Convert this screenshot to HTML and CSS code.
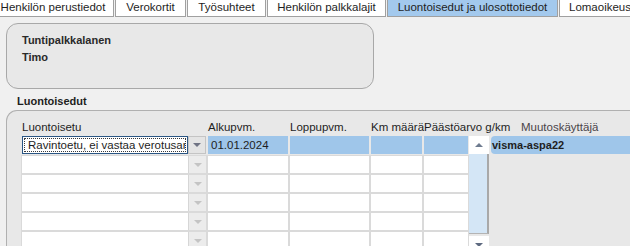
FILE: index.html
```html
<!DOCTYPE html>
<html>
<head>
  <meta charset="utf-8">
  <title>Luontoisedut ja ulosottotiedot</title>
  <link rel="stylesheet" href="styles.css">
</head>
<body>
  <div class="tabs">
    <div class="tab tab-perus">Henkilön perustiedot</div>
    <div class="tab tab-vero">Verokortit</div>
    <div class="tab tab-tyo">Työsuhteet</div>
    <div class="tab tab-palkka">Henkilön palkkalajit</div>
    <div class="tab tab-luontois active">Luontoisedut ja ulosottotiedot</div>
    <div class="tab tab-loma">Lomaoikeus</div>
  </div>

  <div class="card">
    <div class="card-line">Tuntipalkkalanen</div>
    <div class="card-line">Timo</div>
  </div>

  <div class="section-title">Luontoisedut</div>

  <div class="panel">
    <div class="grid">
      <div class="head">Luontoisetu</div>
      <div class="head">Alkupvm.</div>
      <div class="head">Loppupvm.</div>
      <div class="head">Km määrä</div>
      <div class="head">Päästöarvo g/km</div>
      <div class="head"></div>
      <div class="head head-user">Muutoskäyttäjä</div>

      <!-- row 1 (selected) -->
      <div class="combo selected">
        <div class="combo-input"><span class="focus">Ravintoetu, ei vastaa verotusarvoa</span></div>
        <div class="combo-btn"><span class="arrow"></span></div>
      </div>
      <div class="cell sel">01.01.2024</div>
      <div class="cell sel"></div>
      <div class="cell sel"></div>
      <div class="cell sel"></div>
      <div class="vscroll">
        <div class="vs-btn"><span class="tri-up"></span></div>
        <div class="vs-track"></div>
        <div class="vs-btn"><span class="tri-down"></span></div>
      </div>
      <div class="user">visma-aspa22</div>

      <!-- empty rows -->
      <div class="combo"><div class="combo-input"></div><div class="combo-btn"><span class="arrow"></span></div></div>
      <div class="cell"></div><div class="cell"></div><div class="cell"></div><div class="cell"></div>
      <div class="blank"></div>

      <div class="combo"><div class="combo-input"></div><div class="combo-btn"><span class="arrow"></span></div></div>
      <div class="cell"></div><div class="cell"></div><div class="cell"></div><div class="cell"></div>
      <div class="blank"></div>

      <div class="combo"><div class="combo-input"></div><div class="combo-btn"><span class="arrow"></span></div></div>
      <div class="cell"></div><div class="cell"></div><div class="cell"></div><div class="cell"></div>
      <div class="blank"></div>

      <div class="combo"><div class="combo-input"></div><div class="combo-btn"><span class="arrow"></span></div></div>
      <div class="cell"></div><div class="cell"></div><div class="cell"></div><div class="cell"></div>
      <div class="blank"></div>

      <div class="combo"><div class="combo-input"></div><div class="combo-btn"><span class="arrow"></span></div></div>
      <div class="cell"></div><div class="cell"></div><div class="cell"></div><div class="cell"></div>
      <div class="blank"></div>
    </div>
  </div>
</body>
</html>
```

FILE: styles.css
```css
* {
  box-sizing: border-box;
}

body {
  margin: 0;
  background: #f0f0f0;
  font-family: "Liberation Sans", Arial, sans-serif;
  font-size: 11.5px;
  color: #1e1e1e;
  overflow: hidden;
}

/* tab strip, scrolled a bit to the left */
.tabs {
  display: flex;
  gap: 1px;
  margin-left: -12px;
  height: 17px;
  white-space: nowrap;
}

.tab {
  flex: none;
  height: 17px;
  line-height: 14px;
  text-align: center;
  background: #fff;
  border: 1px solid #a0a0a0;
  border-top: none;
}

.tab-perus { width: 126px; padding-left: 4px; }
.tab-vero { width: 71px; }
.tab-tyo { width: 79px; }
.tab-palkka { width: 119px; }
.tab-luontois { width: 171px; }
.tab-loma { width: 100px; text-align: left; padding-left: 9px; }

.tab.active {
  background: #a3c9ed;
}

/* person header */
.card {
  width: 368px;
  height: 66px;
  margin: 6px 0 0 6px;
  padding: 8px 0 0 15px;
  background: #e8e8e8;
  border: 1px solid #a8a8a8;
  border-radius: 12px;
  font-weight: bold;
  font-size: 11px;
  color: #2a2a2a;
}

.card-line {
  line-height: 17px;
}

.section-title {
  margin: 5px 0 2px 17px;
  line-height: 14px;
  font-weight: bold;
  font-size: 11px;
}

.panel {
  margin: 0 -20px 0 6px;
  height: 200px;
  padding: 6px 0 0 15px;
  background: #e8e8e8;
  border-top: 1px solid #b0b0b0;
  border-left: 1px solid #b0b0b0;
  border-top-left-radius: 11px;
}

.grid {
  display: grid;
  grid-template-columns: 184px 80px 79px 51px 44px 19px 1fr;
  grid-template-rows: 17px 18px repeat(5, 17px);
  column-gap: 2px;
  row-gap: 2px;
}

.head {
  align-self: end;
  line-height: 14px;
  white-space: nowrap;
}

.head-user {
  padding-left: 30px;
  color: #4a4448;
}

.cell {
  background: #fff;
  outline: 1px solid #dadada;
}

.cell.sel {
  background: #9fc6ea;
  outline: none;
  padding-left: 3px;
  line-height: 18px;
}

.combo {
  display: flex;
  outline: 1px solid #dadada;
}

.combo-input {
  flex: 1;
  background: #fff;
  overflow: hidden;
  white-space: nowrap;
}

.combo-btn {
  width: 18px;
  display: flex;
  align-items: center;
  justify-content: center;
  background: #ececec;
  border-left: 1px solid #d6d6d6;
}

.arrow {
  width: 0;
  height: 0;
  border-left: 4px solid transparent;
  border-right: 4px solid transparent;
  border-top: 4px solid #c4c4c4;
}

.combo.selected {
  outline: none;
}

.combo.selected .combo-input {
  border: 1px solid #2a5684;
  padding: 1px;
}

.combo.selected .focus {
  display: block;
  height: 14px;
  line-height: 12px;
  padding-left: 3px;
  border: 1px dotted #3a3a3a;
  overflow: hidden;
}

.combo.selected .combo-btn {
  background: #e4e4e4;
  border: 1px solid #c4c4c4;
}

.combo.selected .arrow {
  border-top-color: #6f7383;
}

/* vertical scrollbar of the rows */
.vscroll {
  grid-column: 6;
  grid-row: 2 / span 6;
  display: flex;
  flex-direction: column;
  margin-left: -1px;
}

.vs-btn {
  flex: none;
  height: 18px;
  display: flex;
  align-items: center;
  justify-content: center;
  background: #fff;
}

.vs-track {
  flex: none;
  height: 80px;
  margin-bottom: 2px;
  background: #d4e6f6;
  border-right: 2px solid #a9a9a9;
  border-bottom: 1px solid #b4b4b4;
}

.tri-up,
.tri-down {
  width: 0;
  height: 0;
  border-left: 4px solid transparent;
  border-right: 4px solid transparent;
}

.tri-up {
  border-bottom: 4px solid #6e7b8f;
}

.tri-down {
  border-top: 4px solid #5e6a80;
}

.user {
  background: #9fc6ea;
  border-radius: 4px 0 0 4px;
  padding-left: 1px;
  line-height: 18px;
  font-weight: bold;
  font-size: 11px;
}

.blank {
  grid-column: 7;
}
```
